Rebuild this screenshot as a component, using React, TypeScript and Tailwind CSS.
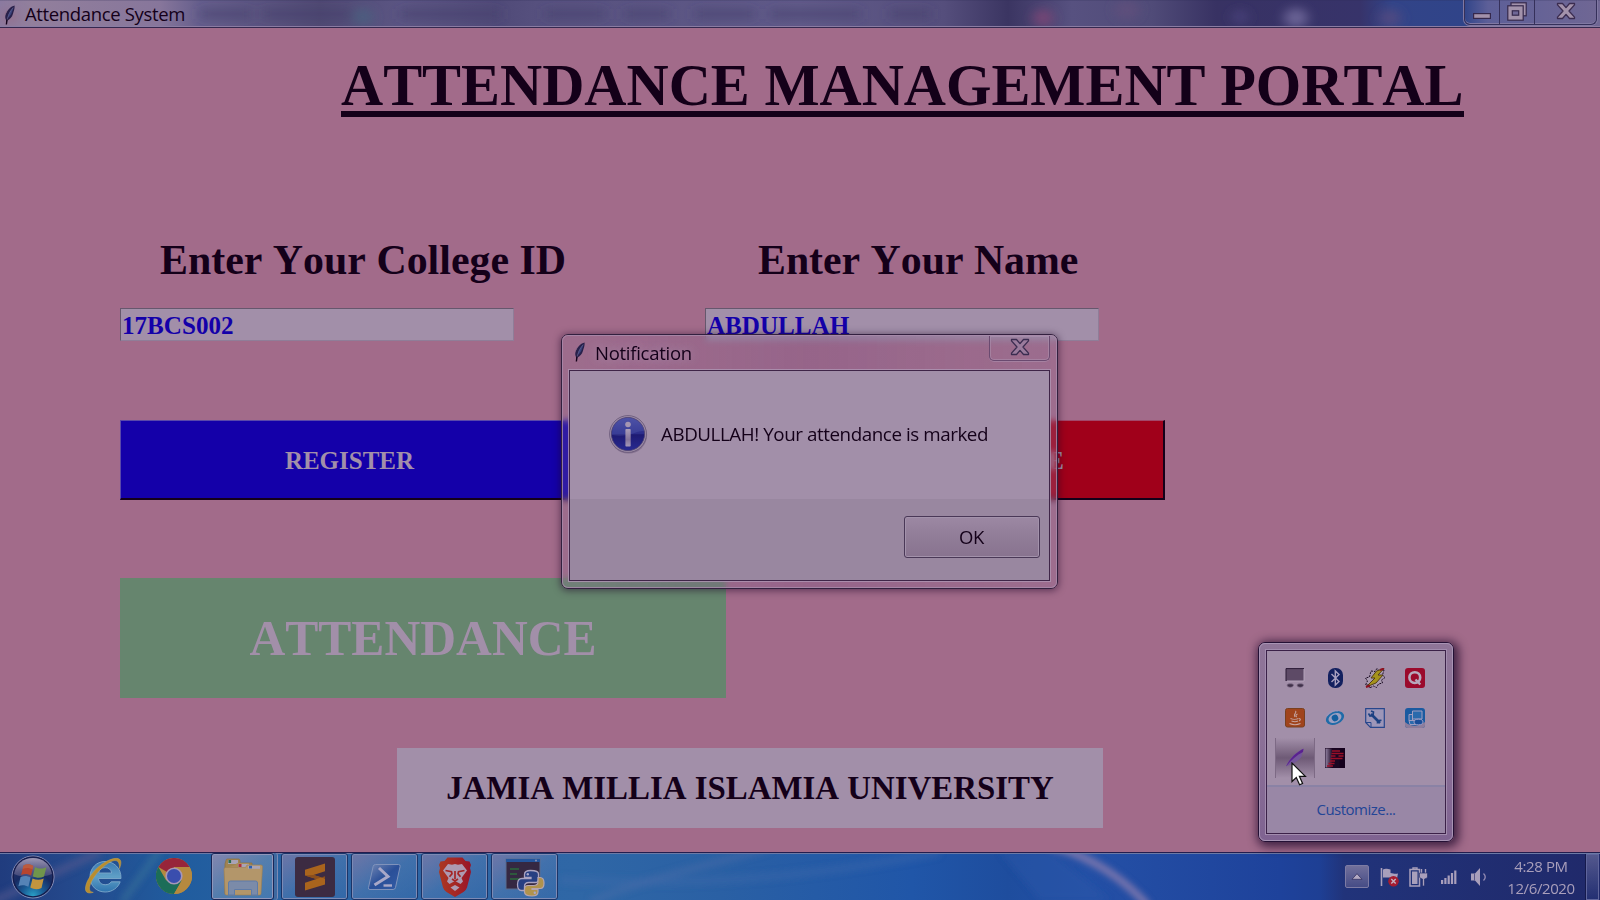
import type { ReactNode } from "react";

function Feather({ className = "" }: { className?: string }) {
  return (
    <svg viewBox="0 0 12 20" className={`h-5 w-3 ${className}`}>
      <path d="M10.6.6C7.2 1.2 2.6 5.4 1.4 10.6c-.3 1.6-.2 3 .6 4.3L2.4 19l1-3.6c2.4-.8 4.6-3 5.6-6.6.5-2 1.9-4.4 1.6-8.2Z" fill="#28204a" />
      <path d="M9.6 2.4C6.6 4.8 4.4 8 3.6 13c2-1.4 3.6-3.2 4.3-5.800.4-1.600 1.200-3 1.700-4.800Z" fill="#39427c" />
      <path d="M9.2 2.6C6 6.400 3.600 10.600 2.600 18" stroke="#6c6a96" strokeWidth=".6" fill="none" />
      <path d="M3 14.500 2.400 19.500" stroke="#140019" strokeWidth="1.400" />
      <path d="M3 5.600 1.200 9.400" stroke="#8a6a86" strokeWidth=".8" />
    </svg>
  );
}

function TitleBackdrop() {
  return (
    <svg className="absolute inset-0 h-full w-full" viewBox="0 0 1600 26" preserveAspectRatio="none">
      <defs>
        <linearGradient id="tb" x1="0" x2="1">
          <stop offset="0" stopColor="#8b7aa0" />
          <stop offset=".02" stopColor="#927f9c" />
          <stop offset=".1" stopColor="#87769b" />
          <stop offset=".125" stopColor="#655e8c" />
          <stop offset=".2" stopColor="#4f4973" />
          <stop offset=".25" stopColor="#5b5583" />
          <stop offset=".31" stopColor="#504a78" />
          <stop offset=".34" stopColor="#57517f" />
          <stop offset=".5" stopColor="#605a89" />
          <stop offset=".59" stopColor="#554e7c" />
          <stop offset=".63" stopColor="#3b3562" />
          <stop offset=".67" stopColor="#575180" />
          <stop offset=".72" stopColor="#504b78" />
          <stop offset=".76" stopColor="#383263" />
          <stop offset=".85" stopColor="#37336a" />
          <stop offset=".87" stopColor="#324488" />
          <stop offset=".915" stopColor="#304489" />
          <stop offset=".93" stopColor="#5d5f98" />
          <stop offset="1" stopColor="#706794" />
        </linearGradient>
        <filter id="tbblur" x="-20%" y="-100%" width="140%" height="300%"><feGaussianBlur stdDeviation="6 5" /></filter>
      </defs>
      <rect width="1600" height="26" fill="url(#tb)" />
      <g filter="url(#tbblur)">
        <rect x="200" y="9" width="52" height="10" fill="#443e69" opacity=".5" />
        <rect x="262" y="9" width="90" height="10" fill="#443e69" opacity=".5" />
        <rect x="400" y="9" width="100" height="10" fill="#443e69" opacity=".5" />
        <rect x="545" y="9" width="60" height="10" fill="#443e69" opacity=".5" />
        <rect x="625" y="9" width="44" height="10" fill="#443e69" opacity=".5" />
        <rect x="695" y="9" width="60" height="10" fill="#443e69" opacity=".5" />
        <rect x="770" y="9" width="90" height="10" fill="#443e69" opacity=".5" />
        <rect x="890" y="9" width="40" height="10" fill="#443e69" opacity=".5" />
        <ellipse cx="363" cy="17" rx="10" ry="9" fill="#4b6080" opacity=".8" />
        <ellipse cx="1043" cy="18" rx="10" ry="9" fill="#7d4475" opacity=".85" />
        <ellipse cx="1127" cy="10" rx="12" ry="10" fill="#62507c" opacity=".7" />
        <ellipse cx="1296" cy="18" rx="12" ry="10" fill="#716a9c" opacity=".85" />
        <ellipse cx="1240" cy="17" rx="8" ry="7" fill="#474178" />
        <ellipse cx="1390" cy="18" rx="11" ry="9" fill="#554a80" opacity=".8" />
        <ellipse cx="10" cy="17" rx="8" ry="7" fill="#95708c" />
      </g>
      <rect width="1600" height="1" fill="#2f2b55" opacity=".2" />
    </svg>
  );
}

function CloseGlyph({ fill = "#a392ab" }: { fill?: string }) {
  return (
    <svg viewBox="0 0 20 18" className="h-[18px] w-5">
      <path d="M1.500 1.500h5L10 5.600l3.500-4.100h5v1.400L13 9l5.500 6.100v1.400h-5L10 12.400 6.500 16.500h-5v-1.400L7 9 1.500 2.900Z" fill={fill} stroke="#3b2c50" strokeWidth="1.300" strokeLinejoin="round" />
    </svg>
  );
}

function WindowControls() {
  return (
    <div className="relative mr-[3px] flex h-[25px] w-[133px] rounded-b-md border border-t-0 border-[#35305a] shadow-[0_0_0_1px_#8078a2,inset_0_-1px_0_#8078a2]">
      <div className="flex w-[35px] items-center justify-center border-r border-[#35305a] pt-[7px]">
        <svg viewBox="0 0 18 6" className="h-[6px] w-[18px]"><rect x=".6" y=".6" width="16.800" height="4.800" fill="#a392ab" stroke="#35284c" strokeWidth="1.200" /></svg>
      </div>
      <div className="flex w-[35px] items-center justify-center border-r border-[#35305a]">
        <svg viewBox="0 0 20 19" className="mt-[-2px] h-[19px] w-5" stroke="#35284c" strokeWidth="1.200">
          <rect x="4" y=".8" width="15.200" height="13" fill="#a392ab" />
          <rect x=".8" y="3.800" width="15.400" height="14.400" fill="#a392ab" />
          <rect x="5.300" y="8.800" width="6.400" height="4.400" fill="#6f6796" />
        </svg>
      </div>
      <div className="flex flex-1 items-center justify-center pb-[3px]"><CloseGlyph /></div>
    </div>
  );
}

function Entry({ value }: { value: string }) {
  return (
    <div className="h-[33px] w-[394px] border border-b-[#8f7d98] border-l-[#66576d] border-r-[#8f7d98] border-t-[#66576d] bg-[#a28fa9] pl-px text-[25.100px] leading-[33px] text-[#1400a9]">
      {value}
    </div>
  );
}

function InfoIcon() {
  return (
    <svg viewBox="0 0 40 40" className="mt-[-2px] h-10 w-10">
      <defs>
        <linearGradient id="inf" x1="0" y1="0" x2="0" y2="1">
          <stop offset="0" stopColor="#4a4ca2" />
          <stop offset=".5" stopColor="#2b2c8a" />
          <stop offset=".52" stopColor="#1e1a72" />
          <stop offset="1" stopColor="#282a92" />
        </linearGradient>
        <linearGradient id="infi" x1="0" y1="0" x2="0" y2="1">
          <stop offset="0" stopColor="#ab9db8" />
          <stop offset=".6" stopColor="#84749a" />
          <stop offset="1" stopColor="#a598b8" />
        </linearGradient>
      </defs>
      <circle cx="20.500" cy="21" r="18.600" fill="#6b5a7a" opacity=".55" />
      <circle cx="20" cy="20" r="18.400" fill="#a08fa8" stroke="#6b5a7a" strokeWidth=".9" />
      <circle cx="20" cy="20" r="16.600" fill="url(#inf)" stroke="#4a3f70" strokeWidth=".8" />
      <path d="M4 21C4 8 14 4 20 4s15 4 16 13c-8-1-14 7-32 4Z" fill="#5b62b4" opacity=".3" />
      <circle cx="20" cy="10.500" r="2.800" fill="#a596b2" />
      <rect x="17.400" y="15" width="5.300" height="17.500" rx=".8" fill="url(#infi)" />
    </svg>
  );
}

function Dialog() {
  return (
    <div className="absolute left-[561px] top-[334px] h-[255px] w-[497px] rounded-[7px] border border-[#33203f] bg-[#95688c]/10 font-['Open_Sans','Noto_Sans',sans-serif] text-[#140019] shadow-[0_1px_7px_1px_rgba(30,5,40,.5)] backdrop-blur-[3px]">
      <div className="flex h-full flex-col rounded-[6px] border border-[#a98cab]/80 bg-linear-to-r from-[#9078a0]/15 via-[#80588a]/30 to-[#9078a0]/20 px-[6px] pb-[6px]">
        <div className="flex h-[34px] shrink-0 items-start">
          <Feather className="ml-[5px] mt-[6px]" />
          <div className="ml-[9px] mt-[5px] whitespace-nowrap text-[18.500px] leading-6 tracking-[-0.270px] [text-shadow:0_0_10px_#a993b0]">Notification</div>
          <div className="ml-auto flex h-[25px] w-[61px] justify-center rounded-b-[5px] border border-t-0 border-[#6a4a70] pt-[2px] shadow-[inset_0_0_0_1px_rgba(176,150,180,.5),0_1px_0_rgba(176,150,180,.5)]">
            <CloseGlyph fill="#9a7b9c" />
          </div>
        </div>
        <div className="flex flex-1 flex-col border border-[#3f2548] bg-[#a28fa9] shadow-[0_0_0_1px_rgba(175,150,180,.8)]">
          <div className="flex h-[128px] items-center pl-[38px]">
            <InfoIcon />
            <div className="ml-[13px] mt-[-2px] whitespace-nowrap text-[18.800px] leading-6 tracking-[-0.430px]">ABDULLAH! Your attendance is marked</div>
          </div>
          <div className="flex flex-1 items-start justify-end bg-[#9987a0] pr-[9px] pt-[17px]">
            <div className="flex h-[42px] w-[136px] items-center justify-center rounded-[3px] border border-[#4a3857] bg-linear-to-b from-[#9c88a3] from-0% via-[#917d98] via-48% to-[#88738f] pr-px text-[18.500px] tracking-[-0.400px] shadow-[inset_0_0_0_1px_#a392ab]">OK</div>
          </div>
        </div>
      </div>
    </div>
  );
}

const trayIcons: ReactNode[] = [
  <svg key="dev" viewBox="0 0 20 20" className="h-5 w-5">
    <rect x="1" y=".5" width="18" height="12.500" fill="#5d4a66" /><path d="M1 13V.6h18" fill="none" stroke="#2a1a35" strokeWidth="1" /><path d="M19 1v12H2" fill="none" stroke="#b3a3ba" />
    <path d="M2 17c0-1.600 6.500-1.600 6.500 0 0 3-6.500 3-6.500 0ZM12 17c0-1.600 6.500-1.600 6.500 0 0 3-6.500 3-6.500 0Z" fill="#3f3049" stroke="#7f6d88" strokeWidth=".8" />
  </svg>,
  <svg key="bt" viewBox="0 0 20 20" className="h-5 w-5">
    <rect x="3" width="15" height="20" rx="7" fill="#13205f" />
    <path d="m6.500 6 7.500 7.500-3.700 3.600V3L14 6.500 6.500 14" fill="none" stroke="#a9a0c0" strokeWidth="1.400" />
  </svg>,
  <svg key="flash" viewBox="0 0 20 20" className="h-5 w-5">
    <path d="m6 3 4 .5 2-3 2 2 5-.5-1.500 5 2.500 2.500-3.500 2.500 1 3-4 1-2 3.500-3-1.500-4 2-1-3-3 0 2-4-2-3 4-1Z" fill="#a99ab0" stroke="#1d0d25" strokeWidth="1" strokeDasharray="2 1" />
    <path d="M19 .5 11.500 3 6 10l4 0-9 9 10-4 7-8-5 0Z" fill="#a5931c" stroke="#4a3410" strokeWidth=".9" />
    <path d="m19 .5-4 1.500M1 19l4-1.500" stroke="#8e1020" strokeWidth="2" />
  </svg>,
  <svg key="q" viewBox="0 0 20 20" className="h-5 w-5">
    <rect width="20" height="20" rx="3" fill="#9b0a2c" />
    <circle cx="9.800" cy="9.600" r="5.400" fill="none" stroke="#b7a9bd" strokeWidth="2.600" /><path d="m10.500 11.500 4.800 5" stroke="#b7a9bd" strokeWidth="2.400" />
  </svg>,
  <svg key="java" viewBox="0 0 20 20" className="h-5 w-5">
    <rect x=".5" y=".5" width="19" height="18.500" rx="2" fill="#a0441c" stroke="#79401f" />
    <path d="M10.500 3c2 2-3 3-.6 6M12.500 6c-2 1-2 2-.8 3M5.500 10.500c2 1 6 1 8 0M6.500 13c2 .8 5 .8 6.500 0M4.500 15.500c3 1.300 8 1.300 11 0M14 10.500c2 0 1.500 2 0 2.500" fill="none" stroke="#c5a4a0" strokeWidth="1.100" />
  </svg>,
  <svg key="eye" viewBox="0 0 20 20" className="h-5 w-5">
    <g transform="rotate(-24 10 10)"><ellipse cx="10" cy="10" rx="9.500" ry="6.400" fill="#1f6ba8" /><ellipse cx="10" cy="10" rx="6.800" ry="4.700" fill="#9b9fc0" /><circle cx="10" cy="10" r="3.300" fill="#135f9f" /></g>
    <path d="M1.500 8C4 3.500 9 1.800 13 2.800" stroke="#9b95b8" strokeWidth="1.400" fill="none" />
  </svg>,
  <svg key="tool" viewBox="0 0 20 20" className="h-5 w-5">
    <path d="M.7.700h18.600v18.600H5.500L.7 14.500Z" fill="#9d96b8" stroke="#27468c" strokeWidth="1.200" />
    <path d="m6 6 9 9" stroke="#1c4182" strokeWidth="2.600" /><path d="M3.500 5.500 5 8l3-.5L8.500 4 6 3M12.500 15.500c-.5-2 1.500-4 4-3" stroke="#1c4182" strokeWidth="1.600" fill="none" /><path d="M1 14.500h5v5" fill="none" stroke="#27468c" />
  </svg>,
  <svg key="intel" viewBox="0 0 20 20" className="h-5 w-5">
    <rect width="20" height="20" rx="3" fill="#1a5aa0" /><path d="M0 14c6 5 13 5 20 0v3q0 3-3 3H3q-3 0-3-3Z" fill="#8d7d9c" />
    <path d="M7.500 3H17v8H7.500ZM4 6.500h3.500v6H4Zm0 6h7v4H5Z" fill="#2a6aac" stroke="#a09dc0" strokeWidth="1" /><ellipse cx="13.500" cy="14" rx="4.500" ry="2.800" fill="#1a4d98" stroke="#a9a5c8" strokeWidth=".9" />
  </svg>,
  <svg key="pen" viewBox="0 0 20 20" className="h-5 w-5">
    <path d="M18.500.8C13 3 5 9 1 18c6-1 14-6 15.500-9.500Z" fill="#74569a" /><path d="M18.500.8C12 4 5 10 1 18.500 6 12 12 7 18 4Z" fill="#5a2190" />
  </svg>,
  <svg key="f" viewBox="0 0 20 20" className="h-5 w-5">
    <defs><linearGradient id="fg"><stop offset="0" stopColor="#9080a0" /><stop offset=".5" stopColor="#1a0622" /></linearGradient></defs>
    <rect width="20" height="20" fill="#14001c" /><rect x=".5" y=".5" width="14" height="19" fill="url(#fg)" />
    <path d="M7 3h8M6.500 5.500h12M6 8h4.500m3 0h5M5.500 10.500h12M5 13h5M3.500 15.500h6M2 18h6" stroke="#9a0f28" strokeWidth="1.300" />
  </svg>,
];

function TrayPopup() {
  return (
    <div className="absolute left-[1258px] top-[642px] h-[200px] w-[196px] rounded-[7px] border border-[#241035] bg-linear-to-b from-[#8f7598] via-[#8b7097] to-[#7f6391] shadow-[2px_2px_10px_3px_rgba(25,5,40,.7)]">
      <div className="flex h-full rounded-[6px] border border-[#a894b4] p-[6px]">
        <div className="flex flex-1 flex-col border border-[#3b2148] bg-[#a28fa9] shadow-[0_0_0_1px_#a28cae]">
          <div className="grid h-[134px] grid-cols-[repeat(4,40px)] grid-rows-[repeat(3,40px)] pl-[8px] pt-[7px]">
            {trayIcons.map((icon, i) => (
              <div key={i} className={i === 8 ? "flex items-center justify-center border-x border-[#7d6a85] bg-linear-to-b from-[#a28fa9] via-[#6e5a76] to-[#a28fa9]" : "flex items-center justify-center"}>
                {icon}
              </div>
            ))}
          </div>
          <div className="flex flex-1 items-center justify-center border-t-2 border-[#8a82a5] bg-[#9987a6] pb-[2px] font-['Open_Sans','Noto_Sans',sans-serif] text-[15px] tracking-[-0.500px] text-[#234596]">
            Customize...
          </div>
        </div>
      </div>
    </div>
  );
}

function Cursor() {
  return (
    <svg viewBox="0 0 16 24" className="absolute left-[1290.500px] top-[761.500px] h-6 w-4">
      <path d="M1 1v18.500l4.300-4 3.300 7.300 3-1.300-3.200-7.200h6Z" fill="#fff" stroke="#111" strokeWidth="1.200" />
    </svg>
  );
}

function TaskbarBackdrop() {
  return (
    <svg className="absolute inset-0 h-full w-full" viewBox="0 852 1600 48" preserveAspectRatio="none">
      <defs>
        <linearGradient id="wall" x1="0" x2="1">
          <stop offset="0" stopColor="#203c7e" />
          <stop offset=".04" stopColor="#24478a" />
          <stop offset=".11" stopColor="#205c9e" />
          <stop offset=".2" stopColor="#2a64a4" />
          <stop offset=".36" stopColor="#2f67a6" />
          <stop offset=".45" stopColor="#2a60a4" />
          <stop offset=".57" stopColor="#2056a8" />
          <stop offset=".63" stopColor="#1e4d9e" />
          <stop offset=".68" stopColor="#2450a6" />
          <stop offset=".8" stopColor="#1e429b" />
          <stop offset=".825" stopColor="#1e3f94" />
          <stop offset=".84" stopColor="#21337a" />
          <stop offset="1" stopColor="#20296a" />
        </linearGradient>
        <filter id="soft" x="-20%" y="-50%" width="140%" height="200%"><feGaussianBlur stdDeviation="3" /></filter>
      </defs>
      <rect y="852" width="1600" height="48" fill="url(#wall)" />
      <g filter="url(#soft)" fill="none">
        <path d="M-10 903 100 852" stroke="#51598f" strokeWidth="9" opacity=".6" />
        <path d="M122 902 160 850" stroke="#457f9a" strokeWidth="7" opacity=".4" />
        <path d="M590 902C640 880 720 862 770 848" stroke="#5870a8" strokeWidth="8" opacity=".3" />
        <path d="M560 880c120 6 240 0 380-28" stroke="#4a6cab" strokeWidth="8" opacity=".3" />
        <path d="M1052 846c40 10 75 36 96 60" stroke="#7f78ae" strokeWidth="8" opacity=".9" />
        <path d="M1000 852h50l60 48h-70Z" fill="#2b58a8" opacity=".5" />
      </g>
    </svg>
  );
}

function StartOrb() {
  return (
    <svg viewBox="0 0 44 44" className="h-11 w-11 shrink-0">
      <defs>
        <radialGradient id="orb" cx=".5" cy=".95" r=".9">
          <stop offset="0" stopColor="#2aa0c6" /><stop offset=".3" stopColor="#195a94" /><stop offset=".6" stopColor="#162a62" /><stop offset="1" stopColor="#2f3768" />
        </radialGradient>
        <linearGradient id="shine" x1="0" y1="0" x2="0" y2="1"><stop offset="0" stopColor="#a9a2bd" stopOpacity=".9" /><stop offset="1" stopColor="#69648f" stopOpacity=".45" /></linearGradient>
      </defs>
      <circle cx="22" cy="22" r="21" fill="url(#orb)" stroke="#8b8fb6" strokeWidth="1" />
      <circle cx="22" cy="22" r="19.800" fill="none" stroke="#151c4c" strokeWidth="1.200" />
      <path d="M3 19C5 8 13 3 22 3s17 5 19 16c-10 4-28 5-38 0Z" fill="url(#shine)" />
      <path d="M12.500 10.500c3.300-1.800 6.800-1.400 9.800.4l-2.200 9.600c-3-1.800-6.400-2.100-10-.5Z" fill="#b8452e" />
      <path d="M24 12c3.700 1.900 7.200 2.200 11.400.2L33 21.500c-3.700 1.800-7.700 1.500-11.200-.3Z" fill="#70954c" />
      <path d="M9.600 22c3.500-1.500 7-1.200 10 .5l-2.200 9.300c-3-1.700-6.400-2.200-10-.6Z" fill="#5583b6" />
      <path d="M21.500 23.400c3.600 1.800 7.300 2 11.200.2L30.500 33c-3.800 1.900-7.600 1.500-11.200-.4Z" fill="#c2953f" />
      <path d="M12.500 10.500c3.300-1.800 6.800-1.400 9.800.4l-.8 3.600c-3-2-6.500-2-9.900-.5Z" fill="#c06a48" opacity=".6" />
    </svg>
  );
}

function IeIcon() {
  return (
    <svg viewBox="0 0 40 40" className="h-10 w-10">
      <defs><linearGradient id="ie" x1="0" y1="0" x2="0" y2="1"><stop offset="0" stopColor="#3b7ab2" /><stop offset=".5" stopColor="#5f9fc6" /><stop offset="1" stopColor="#2e73ae" /></linearGradient></defs>
      <path d="M38 23.500H15.500c.4 4 3 6.200 6.700 6.200 2.700 0 4.800-.9 6-2.900h9c-2.200 6-8 10.200-15 10.200C13.500 37 7 30.800 7 22S13.500 6.500 22 6.500 38.300 12.500 38 23.500ZM15.700 18h13c-.4-3.300-3-5.400-6.500-5.400s-6 2.100-6.500 5.400Z" fill="url(#ie)" stroke="#7fa9cb" strokeWidth=".9" />
      <path d="M36.500 13.500c2-5 2-8.500-.8-9.700C30 1.600 18 8 10 17.500 3.200 25.700.6 34.500 3.800 37.200c1.400 1.100 3.700 1 6.500.1-4.300-.3-5-4-1.800-10.800C12 19.600 20 10.500 28 6.600c5.500-2.500 8.700-.8 8.500 6.900Z" fill="#b98d2e" stroke="#c2a356" strokeWidth=".5" />
    </svg>
  );
}

function ChromeIcon() {
  return (
    <svg viewBox="0 0 36 36" className="h-9 w-9">
      <circle cx="18" cy="18" r="18" fill="#b5893f" />
      <path d="M18 18 2.400 9A18 18 0 0 1 33.600 9H18Z" fill="#97253a" />
      <path d="M2.400 9A18 18 0 0 0 18 36l7.800-13.500L10.200 22.500Z" fill="#1c6d58" />
      <path d="M18 9h15.600A18 18 0 0 1 18 36l7.800-13.500Z" fill="#b5893f" />
      <circle cx="18" cy="18" r="8.600" fill="#a897b6" /><circle cx="18" cy="18" r="7" fill="#3a4eae" />
    </svg>
  );
}

function ExplorerIcon() {
  return (
    <svg viewBox="0 0 40 40" className="h-10 w-10">
      <path d="M3 3.500Q3 2 4.500 2h11Q17 2 17 4v2h12v31H2V7Z" fill="#a08450" stroke="#8e7242" strokeWidth=".8" />
      <rect x="5" y="3" width="10" height="4" fill="#a9a3b4" /><rect x="5.500" y="3" width="2.600" height="3" fill="#286e4f" />
      <path d="M13 7.500Q13 6 14.500 6h11L27 8h6v28H4V11Z" fill="#a98c58" /><rect x="15" y="7" width="11" height="4" fill="#a9a3b4" /><rect x="15.500" y="7" width="3" height="3" fill="#b02f36" />
      <path d="M1 12q0-1.500 1.500-1.500h20L24 8h14q1.500 0 1.500 1.500L38 36.500q0 1.500-1.500 1.500h-33Q2 38 2 36.500Z" fill="#b3966a" stroke="#9d8050" strokeWidth=".6" />
      <rect x="25" y="8.800" width="12" height="3" fill="#a9a3b4" /><rect x="26" y="8.800" width="3" height="2.600" fill="#2c60b0" />
      <path d="M5.500 38V26q0-2 2-2h25q2 0 2 2v12h-6v-5.500h-17V38Z" fill="#748ab0" fillOpacity=".9" stroke="#5e7ba8" strokeWidth="1" />
    </svg>
  );
}

function SublimeIcon() {
  return (
    <svg viewBox="0 0 40 40" className="h-10 w-10">
      <rect width="40" height="40" rx="3" fill="#3c2b42" />
      <path d="M30 6.500v7.800L18.500 18 30 21.600v6L10 33.500v-7.800L21.500 22 10 18.400v-5.600Z" fill="#a9641d" />
      <path d="m10 18.400 11.500 3.600L30 19.200v2.400L18.500 18Z" fill="#8c4f1c" />
    </svg>
  );
}

function PowerShellIcon() {
  return (
    <svg viewBox="0 0 36 28" className="h-7 w-9">
      <defs><linearGradient id="ps" x1="0" y1="0" x2="1" y2="1"><stop offset="0" stopColor="#7488b4" /><stop offset=".5" stopColor="#2a4f98" /><stop offset="1" stopColor="#335ca6" /></linearGradient></defs>
      <path d="M8.500 1.500h23q2 0 1.600 2l-4.600 21q-.4 2-2.400 2H3q-2 0-1.500-2l4.600-21q.4-2 2.400-2Z" fill="url(#ps)" stroke="#7f92bb" strokeWidth="1" />
      <path d="m12 5 9 8.500L7.500 22" fill="none" stroke="#a9a8c8" strokeWidth="3" /><path d="M16.500 22.500H25" stroke="#a9a8c8" strokeWidth="2.400" />
    </svg>
  );
}

function BraveIcon() {
  return (
    <svg viewBox="0 0 36 40" className="h-10 w-9">
      <defs><linearGradient id="br"><stop offset="0" stopColor="#ab3822" /><stop offset=".55" stopColor="#a42625" /><stop offset="1" stopColor="#981428" /></linearGradient></defs>
      <path d="m10.500.500-3 3.500-4 .5-1.500 3.500 1 3-1 4 4 15.500q1 3 3.500 4.500l8.500 5 8.500-5q2.500-1.500 3.500-4.500L34 15l-1-4 1-3-1.500-3.500-4-.5-3-3.500Z" fill="url(#br)" />
      <path d="m11 7 4 .8 3-.8 3 .8 4-.8 5 6.500-5.500 7.500 1.500 3.500-2.500 2.500L18 24l-5.500 3-2.500-2.500 1.500-3.500L6 13.500Z" fill="#ad9ab1" />
      <path d="m18 28 4.500 2.500L18 34l-4.500-3.500Z" fill="#ad9ab1" />
      <path d="m8.500 13.500 6 1.200.5 2-2.500 3M27.500 13.500l-6 1.200-.5 2 2.500 3M18 14v8m-3 0 3 2 3-2" fill="none" stroke="#a42425" strokeWidth="1.700" />
    </svg>
  );
}

function PythonIcon() {
  return (
    <svg viewBox="0 0 40 40" className="h-10 w-10">
      <rect x="1" y="2" width="34" height="30" fill="#352842" stroke="#5a6c90" /><rect x="1" y="2" width="34" height="3" fill="#23559c" />
      <path d="M5 12h9M5 17h7M5 22h11" stroke="#2b6a3c" strokeWidth="1.500" /><circle cx="31" cy="3.500" r="1" fill="#8b93b8" />
      <path d="M25.500 13.500c-5 0-6 2-6 4v3h6.500v1h-9c-3 0-4.500 2.500-4.500 6s1.500 6 4 6h3v-4c0-2.500 2-4 4.500-4h6c2 0 3.500-1.500 3.500-3.500v-5c0-2-2-3.500-8-3.500Z" fill="#273f82" stroke="#aaa3c0" strokeWidth="1.300" />
      <path d="M27 39c5 0 6-2 6-4v-2.500h-6v-1h8.500c3 0 3.500-2.500 3.500-5.500s-1.500-5.500-4-5.500h-2v4c0 2.500-2 4-4.500 4H23c-2 0-3.500 1.500-3.500 3.500V35c0 2.500 2.500 4 7.500 4Z" fill="#b0934d" stroke="#b5a5b0" strokeWidth="1.200" />
      <circle cx="22.800" cy="17.300" r="1.200" fill="#a9a8c8" /><circle cx="29.800" cy="35.700" r="1.200" fill="#a9a8c8" />
    </svg>
  );
}

function TaskButton({ children }: { children: ReactNode }) {
  return (
    <div className="flex h-[47px] w-[67px] items-center justify-center rounded-[3px] border border-[#1a3468] bg-linear-to-br from-[#7f7ba8]/80 via-[#4f78b0]/60 to-[#3b6cab]/50 shadow-[inset_0_0_0_1px_#7d8ab4]">
      {children}
    </div>
  );
}

function Taskbar() {
  return (
    <footer className="relative h-12 w-full shrink-0 overflow-hidden">
      <TaskbarBackdrop />
      <div className="relative flex h-full border-t border-[#231d4e] shadow-[inset_0_1px_0_#6c7aa5]">
        <div className="flex w-[211px] items-center pl-[11px]">
          <StartOrb />
          <div className="ml-[28px] mt-[-4px]"><IeIcon /></div>
          <div className="ml-[33px] mt-[-1px]"><ChromeIcon /></div>
        </div>
        <div className="flex gap-[3px]">
          <div className="flex">
            <div className="flex h-[47px] w-[63px] items-center justify-center rounded-[3px] border border-[#1a2858] bg-linear-to-br from-[#8f8bb0]/90 via-[#6488b2]/75 to-[#4f82b6]/70 shadow-[inset_0_0_0_1px_#9096ba]"><ExplorerIcon /></div>
            <div className="h-[47px] w-[4px] rounded-r-[3px] border-r border-[#7d8ab4] bg-[#3d69a0]" />
          </div>
          <TaskButton><SublimeIcon /></TaskButton>
          <TaskButton><PowerShellIcon /></TaskButton>
          <TaskButton><BraveIcon /></TaskButton>
          <TaskButton><PythonIcon /></TaskButton>
        </div>
        <div className="ml-auto flex items-center">
          <div className="flex h-[23px] w-6 items-center justify-center rounded-[2px] border border-[#7d7ba4] bg-linear-to-b from-[#716f9b] to-[#464c86]">
            <svg viewBox="0 0 12 7" className="h-[7px] w-3"><path d="m6 .700 5 5.600H1Z" fill="#b3a9c2" stroke="#2c2a5a" strokeWidth=".7" /></svg>
          </div>
          <svg viewBox="0 0 20 20" className="ml-[11px] h-5 w-5">
            <path d="M1.500 1v18" stroke="#a99fbb" strokeWidth="1.600" /><path d="M3 2.500c3-1.500 5 0 7.500 0v3.500c3 0 4 1.500 7.500.5l-1 5c-3 1-5 0-7-1H3Z" fill="#a99fbb" />
            <circle cx="13.500" cy="14.200" r="5.300" fill="#a51c30" /><path d="m11.300 12 4.400 4.400m0-4.400-4.400 4.400" stroke="#c4b2c2" strokeWidth="1.400" />
          </svg>
          <svg viewBox="0 0 20 20" className="ml-[9px] h-5 w-5" fill="none" stroke="#a99fbb">
            <path d="M4 2V1h4v1" strokeWidth="1.400" /><rect x="1" y="2.500" width="9.500" height="16.500" strokeWidth="1.500" /><rect x="3" y="4.500" width="5.500" height="12.500" fill="#a99fbb" stroke="none" />
            <path d="M12.500 2v4m4-4v4" strokeWidth="1.400" /><path d="M10.500 6h8v4q0 1.500-3 2v7h-2v-7q-3-.5-3-2Z" fill="#a99fbb" stroke="#27306e" strokeWidth=".7" />
          </svg>
          <svg viewBox="0 0 18 16" className="ml-[11px] h-4 w-[18px]" fill="#a99fbb">
            <rect x="1" y="11" width="2.200" height="4" /><rect x="4.300" y="9" width="2.200" height="6" /><rect x="7.600" y="6.500" width="2.200" height="8.500" /><rect x="10.900" y="4" width="2.200" height="11" /><rect x="14.200" y="1.500" width="2.200" height="13.500" />
          </svg>
          <svg viewBox="0 0 20 20" className="ml-[12px] h-5 w-5">
            <path d="M1 6.500h4L10 1v18l-5-5.500H1Z" fill="#a99fbb" /><path d="M4.500 6.500v7" stroke="#5a5688" /><path d="M13.500 6.500q3.500 3.500 0 7" fill="none" stroke="#9189b2" strokeWidth="1.300" />
          </svg>
          <div className="ml-[9px] mt-[1px] flex w-[84px] flex-col items-center whitespace-nowrap font-['Open_Sans','Noto_Sans',sans-serif] text-[15px] leading-[22px] tracking-[-0.400px] text-[#a99fbb]">
            <span>4:28 PM</span>
            <span>12/6/2020</span>
          </div>
          <div className="ml-[3px] mr-px h-[46px] w-[13px] border border-[#5f659c] bg-linear-to-b from-[#6a6c9c]/70 to-[#2b3a80]/40 shadow-[-1px_0_0_#151a4c]" />
        </div>
      </div>
    </footer>
  );
}

export default function App() {
  return (
    <div className="relative flex h-[900px] w-[1600px] flex-col overflow-hidden bg-[#a26b8a]">
      <header className="relative h-7 shrink-0 border-b border-[#35284f]">
        <div className="relative h-[27px] overflow-hidden border-b border-[#8a7ca2]">
          <TitleBackdrop />
          <div className="relative flex h-[26px] items-start justify-between">
            <div className="flex items-center">
              <Feather className="ml-[4px] mt-[3px]" />
              <h1 className="ml-[9px] whitespace-nowrap pt-[2px] font-['Open_Sans','Noto_Sans',sans-serif] text-[18.500px] leading-6 tracking-[-0.350px] text-[#140019]">Attendance System</h1>
            </div>
            <WindowControls />
          </div>
        </div>
      </header>

      <main className="flex flex-1 flex-col whitespace-nowrap font-['Liberation_Serif',serif] font-bold text-[#140019] [font-kerning:none]">
        <div className="pl-[341px] pt-8">
          <h2 className="h-[57px] w-[1123px] border-b-6 border-[#140019] text-[58.400px] leading-[51px]">ATTENDANCE MANAGEMENT PORTAL</h2>
        </div>
        <div className="mt-[122px] flex pl-[120px]">
          <div className="w-[585px]">
            <div className="pl-[40px] text-[41.900px] leading-[42px]">Enter Your College ID</div>
            <div className="mt-[27px]"><Entry value="17BCS002" /></div>
          </div>
          <div>
            <div className="pl-[53px] text-[41.800px] leading-[42px]">Enter Your Name</div>
            <div className="mt-[27px]"><Entry value="ABDULLAH" /></div>
          </div>
        </div>
        <div className="mt-[79px] flex gap-[126px] pl-[120px] text-[25px] text-[#a28fa9]">
          <div className="flex h-20 w-[459px] items-center justify-center border border-b-2 border-b-[#140019] border-l-[#5a48aa] border-r-[#140019] border-t-[#5a48aa] bg-[#1400a9] pt-[2px]">REGISTER</div>
          <div className="flex h-20 w-[460px] items-center justify-end border border-b-2 border-r-2 border-b-[#140019] border-l-[#a2486a] border-r-[#140019] border-t-[#a2486a] bg-[#a0001a] pr-[99px] pt-[2px]">E</div>
        </div>
        <div className="mt-[78px] pl-[120px]">
          <div className="flex h-[120px] w-[606px] items-center justify-center bg-[#66856e] pt-[2px] text-[49.600px] text-[#a28fa9]">ATTENDANCE</div>
        </div>
        <div className="mt-[50px] pl-[397px]">
          <div className="flex h-20 w-[706px] items-center justify-center bg-[#a28fa9] pt-[2px] text-[32.900px]">JAMIA MILLIA ISLAMIA UNIVERSITY</div>
        </div>
      </main>

      <Taskbar />
      <Dialog />
      <TrayPopup />
      <Cursor />
    </div>
  );
}
